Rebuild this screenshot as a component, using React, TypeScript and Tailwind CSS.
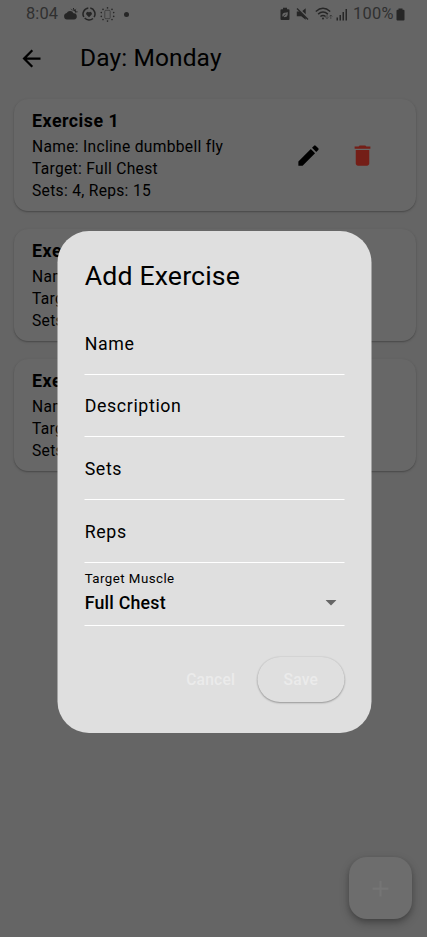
import React from "react";

const exercises = [
  { name: "Incline dumbbell fly", target: "Full Chest", sets: 4, reps: 15 },
  { name: "Narrow push up", target: "Full Chest", sets: 4, reps: 15 },
  { name: "Narrow bench press", target: "Full Chest", sets: 4, reps: 12 },
];

const fields = ["Name", "Description", "Sets", "Reps"];

function StatusBar() {
  return (
    <div className="flex h-[28px] items-center pl-[26px] pr-[22px] text-[#262626]">
      <span className="w-[33px] whitespace-nowrap text-[16.4px] leading-[28px] tracking-[0.1px] text-[#303030]">8:04</span>
      <svg className="ml-[4px] h-[14px] w-[15px]" viewBox="0 0 15 14" fill="currentColor">
        <path d="M4 12.5a3.3 3.3 0 0 1-.3-6.5A3.8 3.8 0 0 1 10.500 6.300 3.100 3.100 0 0 1 10.900 12.500z" />
        <path d="M9 3.300a2.500 2.500 0 0 1 3.800 3.300A4 4 0 0 0 9 3.300z" />
        <path d="M10.500 1v1M7.900 2l.7.700M13.100 2l-.7.700M14.500 4.800h-1" stroke="currentColor" strokeWidth="1" />
      </svg>
      <svg className="ml-[4px] h-[14px] w-[14px]" viewBox="0 0 14 14" fill="none" stroke="currentColor" strokeWidth="1.500">
        <path d="M8.300 1.100a6 6 0 0 1 3.800 9M11 11.500a6 6 0 0 1-8.300-.4M1.800 10A6 6 0 0 1 6.300 1.100" />
        <path d="M7 10.200 4.300 7.400a1.700 1.700 0 0 1 2.700-2 1.700 1.700 0 0 1 2.700 2z" fill="currentColor" stroke="none" />
      </svg>
      <svg className="ml-[4px] h-[15px] w-[15px]" viewBox="0 0 15 15" fill="currentColor">
        <rect x="4.800" y="3.300" width="5.400" height="8.400" rx="1" fill="none" stroke="currentColor" strokeWidth=".7" opacity=".8" />
        <circle cx="7.500" cy=".9" r=".8" /><circle cx="7.500" cy="14.100" r=".8" />
        <circle cx="3" cy="2.400" r=".8" /><circle cx="12" cy="2.400" r=".8" />
        <circle cx="1.300" cy="5.600" r=".8" /><circle cx="13.700" cy="5.600" r=".8" />
        <circle cx="1.300" cy="9.400" r=".8" /><circle cx="13.700" cy="9.400" r=".8" />
        <circle cx="3" cy="12.600" r=".8" /><circle cx="12" cy="12.600" r=".8" />
      </svg>
      <span className="ml-[9px] h-[5px] w-[5px] rounded-full bg-current" />
      <svg className="ml-auto h-[14px] w-[10px]" viewBox="0 0 10 14">
        <path d="M3 .8h4v1.400h1.500q1 0 1 1V12q0 1-1 1h-7q-1 0-1-1V3.200q0-1 1-1H3z" fill="currentColor" />
        <path d="M2.400 9.600Q1.800 6.200 4.400 5.700q2 .1 3.300-.7.600 4.700-2.300 5.100-1 .2-2-.4z" fill="#666" />
        <path d="m2.300 10.500 3.400-3.300" stroke="currentColor" strokeWidth=".8" />
      </svg>
      <svg className="ml-[6px] h-[14px] w-[13px]" viewBox="0 0 13 14" fill="currentColor">
        <path d="M.8 4.500h3l5.900 5.900v2.400L5.300 9.300H.8zM9.700 1.200v6L6.300 3.900z" />
        <path d="m1 1.500 11 11" stroke="currentColor" strokeWidth="1.300" />
      </svg>
      <svg className="ml-[6px] h-[14px] w-[18px]" viewBox="0 0 18 14" fill="none" stroke="currentColor" strokeWidth="1.400">
        <path d="M.8 4.500Q8 -2 15.200 4.500M3.100 7.100q4.900-4.300 9.800 0M5.400 9.500q2.600-2.200 5.200 0" />
        <circle cx="8" cy="11.600" r="1" fill="currentColor" stroke="none" />
        <path d="M12 7.500v4m-1.500-1.300L12 11.700l1.500-1.500M15.800 12V8m-1.500 1.500L15.800 8l1.500 1.500" strokeWidth=".8" opacity=".65" />
      </svg>
      <svg className="ml-[3px] h-[13px] w-[12px]" viewBox="0 0 12 13" fill="currentColor">
        <rect x=".5" y="9.500" width="1.500" height="3" /><rect x="3.500" y="7" width="1.500" height="5.500" />
        <rect x="6.500" y="4" width="1.500" height="8.500" /><rect x="9.500" y="1" width="1.500" height="11.500" />
      </svg>
      <span className="ml-[5px] w-[43px] whitespace-nowrap text-[16.4px] leading-[28px] tracking-[0.300px] text-[#303030]">100%</span>
      <svg className="h-[13px] w-[9px]" viewBox="0 0 9 13" fill="currentColor">
        <path d="M2.500.5h4v1.200h1q1 0 1 1v8.800q0 1-1 1h-6q-1 0-1-1V2.700q0-1 1-1h1z" />
      </svg>
    </div>
  );
}

function ExerciseCard({ index, exercise }: { index: number; exercise: (typeof exercises)[number] }) {
  return (
    <section className="flex h-[112px] items-center rounded-[14px] bg-[#676767] pl-[18px] pr-[40px] shadow-[0_1px_3px_rgba(0,0,0,0.16),0_1px_1px_rgba(0,0,0,0.15)]">
      <div className="flex-1 whitespace-nowrap text-[15.6px] leading-[22px] tracking-[0.3px] text-black">
        <h2 className="mb-[2px] text-[17.800px] font-bold leading-[26px] tracking-[0.5px]">Exercise {index}</h2>
        <p>Name: {exercise.name}</p>
        <p>Target: {exercise.target}</p>
        <p className="mb-px">Sets: {exercise.sets}, Reps: {exercise.reps}</p>
      </div>
      <svg className="h-[27px] w-[27px]" viewBox="0 0 24 24" fill="#000">
        <path d="M3 17.250V21h3.750L17.810 9.940l-3.750-3.750zM20.710 7.040a1 1 0 0 0 0-1.410l-2.340-2.340a1 1 0 0 0-1.410 0l-1.830 1.830 3.750 3.750z" />
      </svg>
      <svg className="ml-[27px] h-[27px] w-[27px]" viewBox="0 0 24 24" fill="#741e17">
        <path d="M6 19c0 1.100.9 2 2 2h8c1.100 0 2-.9 2-2V7H6zM19 4h-3.500l-1-1h-5l-1 1H5v2h14z" />
      </svg>
    </section>
  );
}

function AddExerciseDialog() {
  return (
    <div role="dialog" className="absolute left-[57px] top-[231px] flex h-[502px] w-[314px] translate-x-[0.5px] flex-col rounded-[31.500px] bg-[#dfdfdf] px-[27.200px] text-black">
      <h2 className="mt-[27px] h-[54px] whitespace-nowrap text-[26.700px] leading-[36px] tracking-[0.150px]">Add Exercise</h2>
      {fields.map((label) => (
        <label key={label} className="flex h-[62.700px] shrink-0 items-center border-b border-white pt-[2px] text-[17.800px] tracking-[0.620px]">
          {label}
        </label>
      ))}
      <div className="flex h-[63px] shrink-0 flex-col border-b border-white pt-[7px]">
        <span className="text-[13.300px] leading-[18px] tracking-[0.450px]">Target Muscle</span>
        <div className="flex items-center justify-between pr-[8px] text-[17.800px] font-medium leading-[30px] tracking-[0.200px]">
          Full Chest
          <svg className="mt-px h-[6px] w-[11px]" viewBox="0 0 11 6" fill="#666"><path d="M0 0h11L5.500 5.600z" /></svg>
        </div>
      </div>
      <div className="mt-[31px] flex h-[45px] items-center justify-end text-[15.600px] font-medium tracking-[0.240px] text-[#ebebeb]">
        <span className="mr-[22px] pt-[2px]">Cancel</span>
        <button className="h-[45px] w-[87px] rounded-full bg-[#dfdfdf] pt-[2px] shadow-[0_1px_2px_rgba(0,0,0,0.3),0_0_2px_rgba(0,0,0,0.12)]">Save</button>
      </div>
    </div>
  );
}

export default function App() {
  return (
    <div className="relative h-[937px] w-[427px] overflow-hidden bg-[#656565] font-[Roboto,sans-serif]">
      <StatusBar />
      <header className="flex h-[60px] items-center pl-[18px] text-black">
        <svg className="h-[27px] w-[27px]" viewBox="0 0 24 24" fill="currentColor">
          <path d="M20 11H7.830l5.590-5.590L12 4l-8 8 8 8 1.410-1.410L7.830 13H20z" />
        </svg>
        <h1 className="ml-[35px] whitespace-nowrap text-[24.500px] tracking-[0.120px]">Day: Monday</h1>
      </header>
      <main className="flex flex-col gap-[18px] pl-[14px] pr-[11px] pt-[11px]">
        {exercises.map((exercise, i) => <ExerciseCard key={exercise.name} index={i + 1} exercise={exercise} />)}
      </main>
      <button className="absolute left-[349px] top-[857px] flex h-[62px] w-[63px] items-center justify-center rounded-[18px] bg-[#6d6d6d] shadow-[0_4px_10px_rgba(0,0,0,0.28),0_2px_4px_rgba(0,0,0,0.12)]">
        <svg className="h-[27px] w-[27px]" viewBox="0 0 24 24" fill="#757575"><path d="M19 13h-6v6h-2v-6H5v-2h6V5h2v6h6z" /></svg>
      </button>
      <AddExerciseDialog />
    </div>
  );
}
